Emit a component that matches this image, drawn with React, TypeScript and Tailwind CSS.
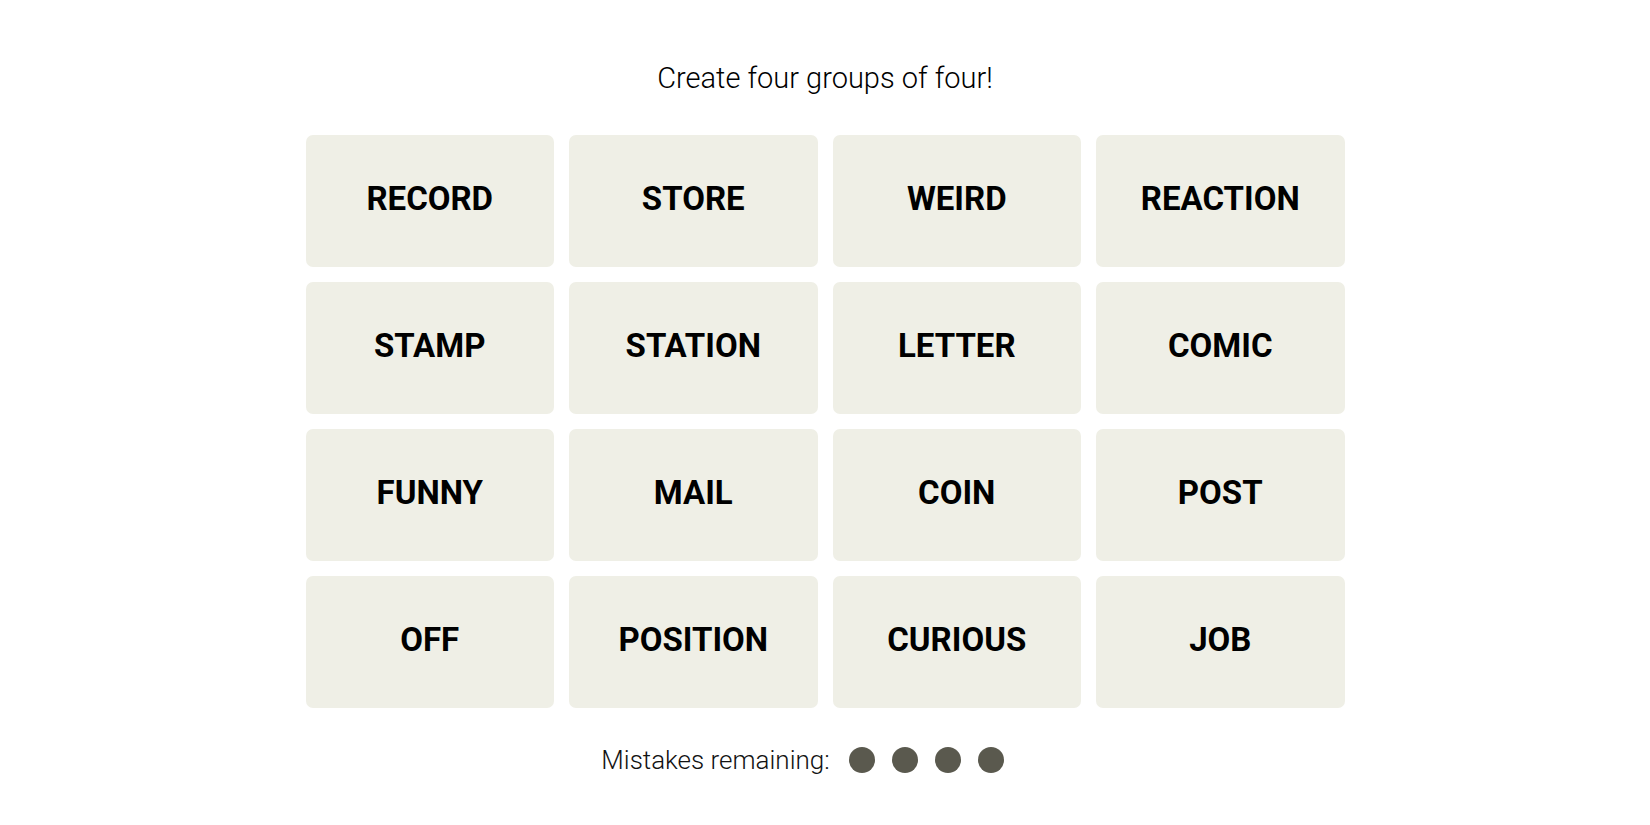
const words = [
  'RECORD', 'STORE', 'WEIRD', 'REACTION',
  'STAMP', 'STATION', 'LETTER', 'COMIC',
  'FUNNY', 'MAIL', 'COIN', 'POST',
  'OFF', 'POSITION', 'CURIOUS', 'JOB',
];

export default function App() {
  return (
    <div className="min-h-screen bg-white flex flex-col items-center font-['Roboto',sans-serif] text-black">
      <h1 className="mt-[61px] text-[29px] leading-[34px] font-light">Create four groups of four!</h1>

      <div className="mt-[40px] grid grid-cols-4 gap-[15px] w-[1039px]">
        {words.map((w) => (
          <button
            key={w}
            className="h-[132px] rounded-[7px] bg-[#efefe6] flex items-center justify-center pb-[4px] text-[33px] font-bold"
          >
            {w}
          </button>
        ))}
      </div>

      <div className="mt-[39px] flex items-center h-[26px] pr-[45px]">
        <span className="text-[26px] font-light leading-none text-[#121212]">Mistakes remaining:</span>
        <div className="ml-[19px] flex gap-[17px]">
          {[0, 1, 2, 3].map((i) => (
            <span key={i} className="w-[26px] h-[26px] rounded-full bg-[#5a594e]" />
          ))}
        </div>
      </div>
    </div>
  );
}
